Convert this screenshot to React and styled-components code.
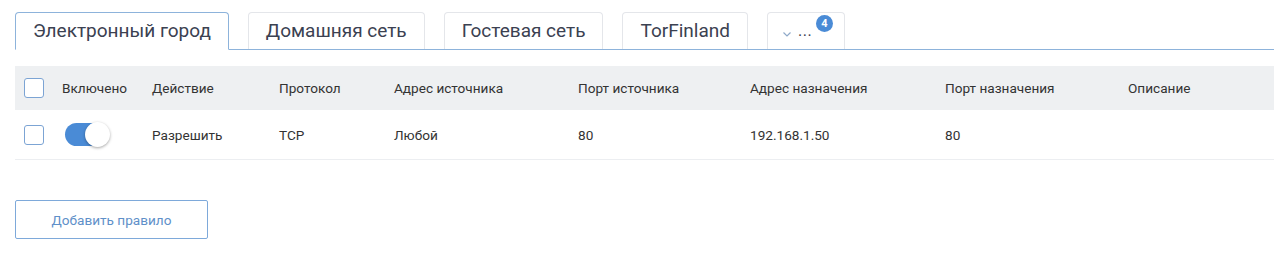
import React, { useState } from 'react'
import styled, { createGlobalStyle } from 'styled-components'

const GlobalStyle = createGlobalStyle`
  body {
    margin: 0;
    background: #fff;
    font-family: Roboto, "Noto Sans", sans-serif;
    color: #2b2f38;
  }
`;

const Page = styled.div`
  padding: 12px 6px 0 15px;
`;

const TabBar = styled.div`
  display: flex;
  align-items: flex-end;
  gap: 19px;
  border-bottom: 1px solid #8db3db;
  height: 37px;
`;

const Tab = styled.div`
  position: relative;
  display: flex;
  align-items: center;
  gap: 6px;
  box-sizing: border-box;
  height: ${({ $active }) => ($active ? '38px' : '37px')};
  margin-bottom: ${({ $active }) => ($active ? '-1px' : '0')};
  padding: 0 ${({ $pad }) => $pad || 17}px 1px;
  font-size: 19px;
  color: #3b4151;
  background: #fff;
  border: 1px solid ${({ $active }) => ($active ? '#8db3db' : '#e4e6ea')};
  border-bottom: ${({ $active }) => ($active ? '1px solid #fff' : 'none')};
  border-radius: 4px 4px 0 0;
  cursor: pointer;
  white-space: nowrap;
`;

const Chevron = styled.svg`
  width: 10px;
  height: 10px;
  margin-top: 6px;
`;

const Dots = styled.span`
  font-size: 16px;
  letter-spacing: 0.5px;
`;

const Badge = styled.span`
  position: absolute;
  top: 2px;
  right: 11px;
  width: 17px;
  height: 17px;
  border-radius: 50%;
  background: #4a8bd6;
  color: #fff;
  font-size: 11px;
  font-weight: 700;
  display: flex;
  align-items: center;
  justify-content: center;
`;

const Table = styled.div`
  margin-top: 16px;
`;

const Row = styled.div`
  display: grid;
  grid-template-columns: 38px 90px 127px 115px 184px 172px 195px 183px 1fr;
  align-items: center;
  padding-left: 9px;
  font-size: 13.6px;
  height: ${({ $head }) => ($head ? '44px' : '49px')};
  background: ${({ $head }) => ($head ? '#eef0f2' : '#fff')};
  color: #333;
  border-bottom: ${({ $head }) => ($head ? 'none' : '1px solid #eceef1')};
`;

const Checkbox = styled.span`
  display: block;
  width: 20px;
  height: 20px;
  box-sizing: border-box;
  border: 1px solid #7ca4d4;
  border-radius: 3px;
  background: #fff;
`;

const Toggle = styled.span`
  position: relative;
  display: block;
  width: 42px;
  height: 23px;
  margin-left: 3px;
  border-radius: 12px;
  background: ${({ $on }) => ($on ? '#4a8bd6' : '#c9ced6')};
  cursor: pointer;
`;

const Knob = styled.span`
  position: absolute;
  top: -1px;
  left: ${({ $on }) => ($on ? '20px' : '-2px')};
  width: 25px;
  height: 25px;
  border-radius: 50%;
  background: #fff;
  box-shadow: 0 1px 3px rgba(0, 0, 0, 0.35);
`;

const AddButton = styled.button`
  margin-top: 40px;
  width: 193px;
  height: 39px;
  background: #fff;
  border: 1px solid #7ea9da;
  border-radius: 2px;
  color: #5f90c9;
  font-family: Roboto, sans-serif;
  font-size: 13.6px;
  cursor: pointer;
`;

const tabs = [
  { name: 'Электронный город' },
  { name: 'Домашняя сеть' },
  { name: 'Гостевая сеть' },
  { name: 'TorFinland' },
];

const columns = [
  'Включено',
  'Действие',
  'Протокол',
  'Адрес источника',
  'Порт источника',
  'Адрес назначения',
  'Порт назначения',
  'Описание',
];

const rules = [
  { enabled: true, action: 'Разрешить', proto: 'TCP', src: 'Любой', srcPort: '80', dst: '192.168.1.50', dstPort: '80', desc: '' },
];

const App = () => {
  const [active, setActive] = useState(0);

  return (
    <Page>
      <GlobalStyle />
      <TabBar>
        {tabs.map((t, i) => (
          <Tab key={t.name} $active={i === active} onClick={() => setActive(i)}>
            {t.name}
          </Tab>
        ))}
        <Tab $pad={14} style={{ width: 78 }}>
          <Chevron viewBox="0 0 10 10">
            <path d="M1.5 3.5 L5 7 L8.5 3.5" fill="none" stroke="#8fa9c9" strokeWidth="1.2" />
          </Chevron>
          <Dots>...</Dots>
          <Badge>4</Badge>
        </Tab>
      </TabBar>

      <Table>
        <Row $head>
          <Checkbox />
          {columns.map((c) => (
            <span key={c}>{c}</span>
          ))}
        </Row>
        {rules.map((r, i) => (
          <Row key={i}>
            <Checkbox />
            <Toggle $on={r.enabled}>
              <Knob $on={r.enabled} />
            </Toggle>
            <span>{r.action}</span>
            <span>{r.proto}</span>
            <span>{r.src}</span>
            <span>{r.srcPort}</span>
            <span>{r.dst}</span>
            <span>{r.dstPort}</span>
            <span>{r.desc}</span>
          </Row>
        ))}
      </Table>

      <AddButton>Добавить правило</AddButton>
    </Page>
  )
}

export default App
